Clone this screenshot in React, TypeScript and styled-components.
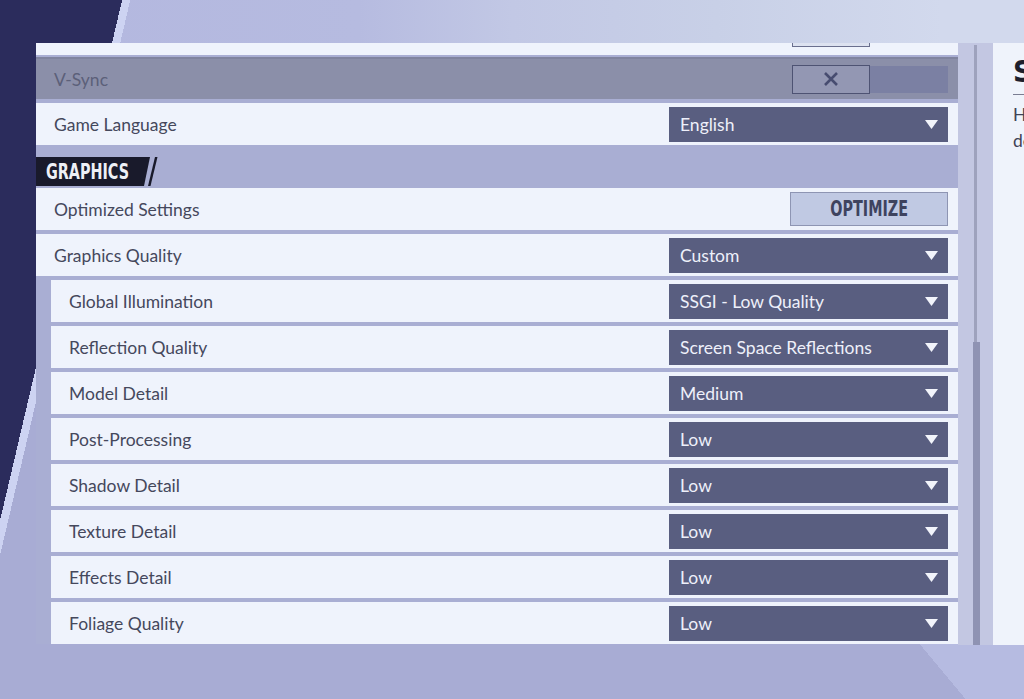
import styled, { createGlobalStyle } from "styled-components";

const GlobalStyle = createGlobalStyle`
  html, body {
    margin: 0;
    padding: 0;
    overflow: hidden;
  }
  body {
    font-family: Lato, "Noto Sans", sans-serif;
  }
`;

const Screen = styled.div`
  width: 1024px;
  height: 699px;
  overflow: hidden;
  box-sizing: border-box;
  padding: 43px 0 0 36px;
  display: flex;
  align-items: flex-start;
  background-color: #a8acd4;
  background-image:
    linear-gradient(103.2deg, #2b2c5c 45%, #cdd3f2 45%, #cdd3f2 48%, transparent 48%),
    linear-gradient(50.2deg, transparent 56.6%, #b6bbe1 56.6%),
    linear-gradient(90deg, #b3b7df 0%, #b6bbe0 35%, #c2c8e5 50%, #c8d0e7 70%, #d2d9ed 92%);
  background-size: 140px 560px, 200px 60px, 100% 45px;
  background-position: left top, right bottom, left top;
  background-repeat: no-repeat;
`;

const Panel = styled.div`
  width: 922px;
  flex-shrink: 0;
  display: flex;
  flex-direction: column;
  gap: 4px;
  background: #a9aed3;
`;

const Stub = styled.div`
  height: 12px;
  margin-bottom: -2px;
  background: #eff3fc;
  display: flex;
  justify-content: flex-end;
  padding-right: 88px;
`;

const StubButton = styled.div`
  width: 78px;
  height: 4px;
  box-sizing: border-box;
  border: 1px solid #6a6f8e;
  border-top: none;
  background: #dde2f0;
`;

const Row = styled.div<{ $indent?: boolean; $muted?: boolean }>`
  height: 42px;
  margin-left: ${(p) => (p.$indent ? "15px" : "0")};
  box-sizing: border-box;
  padding: 0 10px 0 18px;
  display: flex;
  align-items: center;
  justify-content: space-between;
  background: ${(p) => (p.$muted ? "#8b8fa9" : "#eff3fc")};
  border-top: ${(p) => (p.$muted ? "2px solid #80849f" : "none")};
  color: ${(p) => (p.$muted ? "#5c6079" : "#45485c")};
  font-size: 17.5px;
`;

const Dropdown = styled.div`
  width: 279px;
  height: 35px;
  box-sizing: border-box;
  padding: 0 10px 0 11px;
  display: flex;
  align-items: center;
  justify-content: space-between;
  background: #595e80;
  color: #eef0fa;
  font-size: 17.5px;
`;

const Toggle = styled.div`
  width: 156px;
  height: 29px;
  display: flex;
`;

const ToggleBox = styled.div`
  width: 78px;
  box-sizing: border-box;
  border: 1px solid #4e5373;
  background: #9397b3;
  display: flex;
  align-items: center;
  justify-content: center;
`;

const ToggleTrack = styled.div`
  flex: 1;
  margin: 1px 0;
  background: #7b80a3;
`;

const Header = styled.div`
  height: 37px;
  margin-bottom: -2px;
  display: flex;
  align-items: flex-end;
`;

const Tag = styled.div`
  width: 114px;
  height: 29px;
  box-sizing: border-box;
  padding-left: 10px;
  display: flex;
  align-items: center;
  background: #191a2b;
  clip-path: polygon(0 0, 100% 0, calc(100% - 6px) 100%, 0 100%);
`;

const Slash = styled.div`
  width: 12px;
  height: 29px;
  margin-left: -4px;
  background: #191a2b;
  clip-path: polygon(9px 0, 11.5px 0, 4.5px 100%, 2px 100%);
`;

const Condensed = styled.span<{ $color: string; $weight?: number }>`
  display: inline-block;
  font-family: "DejaVu Sans Condensed", "DejaVu Sans", sans-serif;
  font-stretch: condensed;
  font-weight: ${(p) => p.$weight ?? 700};
  font-size: 21px;
  color: ${(p) => p.$color};
  transform: scaleX(0.76);
  transform-origin: center;
  white-space: nowrap;
`;

const OptimizeButton = styled.div`
  width: 158px;
  height: 34px;
  box-sizing: border-box;
  border: 1px solid #8e95b3;
  background: #c0c9e3;
  display: flex;
  align-items: center;
  justify-content: center;
`;

const ScrollColumn = styled.div`
  width: 35px;
  height: 602px;
  flex-shrink: 0;
  background: #c3c7e2;
  display: flex;
  justify-content: center;
`;

const ScrollTrack = styled.div`
  width: 3px;
  margin-top: 2px;
  background: #9ea2bd;
  display: flex;
  flex-direction: column;
  justify-content: flex-end;
`;

const ScrollThumb = styled.div`
  width: 7px;
  height: 303px;
  margin-left: -1px;
  background: #8f93b3;
`;

const SidePanel = styled.div`
  width: 320px;
  height: 602px;
  flex-shrink: 0;
  box-sizing: border-box;
  padding: 12px 0 0 20px;
  background: #eff3fb;
`;

const SideTitle = styled.div`
  font-family: "DejaVu Sans Condensed", "DejaVu Sans", sans-serif;
  font-weight: bold;
  font-size: 30px;
  line-height: 34px;
  color: #1d1e2c;
`;

const SideRule = styled.div`
  height: 1px;
  margin-top: 5px;
  background: #7a7d92;
`;

const SideText = styled.p`
  margin: 7px 0 0;
  font-size: 17.5px;
  line-height: 26px;
  color: #3f4256;
`;

const Arrow = () => (
  <svg width="13" height="9" viewBox="0 0 13 9">
    <polygon points="0,0 13,0 6.5,9" fill="#f2f4fb" />
  </svg>
);

const Cross = () => (
  <svg width="16" height="16" viewBox="0 0 16 16">
    <path d="M2 2 L14 14 M14 2 L2 14" stroke="#474c70" strokeWidth="2.6" />
  </svg>
);

const Select = ({ value }: { value: string }) => (
  <Dropdown>
    <span>{value}</span>
    <Arrow />
  </Dropdown>
);

const subSettings: [string, string][] = [
  ["Global Illumination", "SSGI - Low Quality"],
  ["Reflection Quality", "Screen Space Reflections"],
  ["Model Detail", "Medium"],
  ["Post-Processing", "Low"],
  ["Shadow Detail", "Low"],
  ["Texture Detail", "Low"],
  ["Effects Detail", "Low"],
  ["Foliage Quality", "Low"],
];

export default function App() {
  return (
    <>
      <GlobalStyle />
      <Screen>
        <Panel>
          <Stub>
            <StubButton />
          </Stub>
          <Row $muted>
            <span>V-Sync</span>
            <Toggle>
              <ToggleBox>
                <Cross />
              </ToggleBox>
              <ToggleTrack />
            </Toggle>
          </Row>
          <Row>
            <span>Game Language</span>
            <Select value="English" />
          </Row>
          <Header>
            <Tag>
              <Condensed $color="#eef0f6" style={{ transformOrigin: "left center" }}>
                GRAPHICS
              </Condensed>
            </Tag>
            <Slash />
          </Header>
          <Row>
            <span>Optimized Settings</span>
            <OptimizeButton>
              <Condensed $color="#3e435f" $weight={600}>
                OPTIMIZE
              </Condensed>
            </OptimizeButton>
          </Row>
          <Row>
            <span>Graphics Quality</span>
            <Select value="Custom" />
          </Row>
          {subSettings.map(([label, value]) => (
            <Row $indent key={label}>
              <span>{label}</span>
              <Select value={value} />
            </Row>
          ))}
        </Panel>
        <ScrollColumn>
          <ScrollTrack>
            <ScrollThumb />
          </ScrollTrack>
        </ScrollColumn>
        <SidePanel>
          <SideTitle>SETTINGS</SideTitle>
          <SideRule />
          <SideText>
            Hover over a setting to see
            <br />
            details about what it does.
          </SideText>
        </SidePanel>
      </Screen>
    </>
  );
}
